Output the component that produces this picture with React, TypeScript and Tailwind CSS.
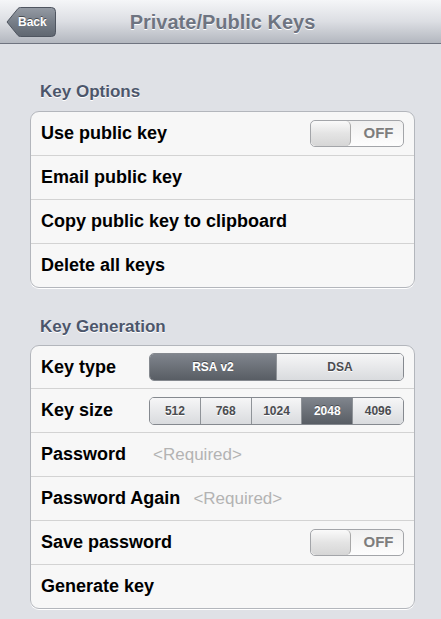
const font = { fontFamily: '"Liberation Sans", Arial, sans-serif' };

const BackButton = () => (
  <div className="relative w-[50px] h-[30px]">
    <svg className="absolute inset-0" width="50" height="30" viewBox="0 0 50 30">
      <defs>
        <linearGradient id="backGrad" x1="0" y1="0" x2="0" y2="1">
          <stop offset="0" stopColor="#959ba4" />
          <stop offset="0.5" stopColor="#777e88" />
          <stop offset="1" stopColor="#5f6670" />
        </linearGradient>
      </defs>
      <path
        d="M1 15 L12 1.5 Q13 0.5 14.5 0.5 H45.5 Q49.5 0.5 49.5 4.5 V25.5 Q49.5 29.5 45.5 29.5 H14.5 Q13 29.5 12 28.5 Z"
        fill="url(#backGrad)"
        stroke="#4f5560"
        strokeWidth="1"
      />
    </svg>
    <span className="relative flex h-full items-center pl-[12px] text-[12px] font-bold text-white [text-shadow:0_-1px_0_rgba(0,0,0,0.45)]">
      Back
    </span>
  </div>
);

const Toggle = () => (
  <div className="flex h-[27px] w-[94px] overflow-hidden rounded-[5px] border border-[#a3a5a9] bg-gradient-to-b from-[#f0f0f0] to-[#fdfdfd]">
    <div className="w-[40px] rounded-[5px] border-r border-[#a8a8a8] bg-gradient-to-b from-[#fafafa] via-[#e4e4e4] to-[#d6d6d6]" />
    <div className="flex flex-1 items-center justify-center pl-[3px] text-[15px] font-bold text-[#7d7d7d]">
      OFF
    </div>
  </div>
);

const Segmented = ({ items, selected }: { items: string[]; selected: number }) => (
  <div className="flex h-[28px] w-[255px] overflow-hidden rounded-[5px] border border-[#85898f]">
    {items.map((item, i) => (
      <div
        key={item}
        className={
          "flex flex-1 items-center justify-center text-[12px] font-bold " +
          (i > 0 ? "border-l border-[#8f9398] " : "") +
          (i === selected
            ? "bg-gradient-to-b from-[#80858d] to-[#585d64] text-white [text-shadow:0_-1px_0_rgba(0,0,0,0.4)]"
            : "bg-gradient-to-b from-[#f6f6f7] to-[#d9dbde] text-[#4a4c50] [text-shadow:0_1px_0_#ffffff]")
        }
      >
        {item}
      </div>
    ))}
  </div>
);

// rows are 44px with their top separator; the first row of a group has no separator
const Row = ({ children, first }: { children: React.ReactNode; first?: "h43" | "h42" }) => (
  <div
    className={
      "flex items-center pl-[10px] pr-[10px] " +
      (first === "h43" ? "h-[43px]" : first === "h42" ? "h-[42px]" : "h-[44px] border-t border-[#d3d3d3]")
    }
  >
    {children}
  </div>
);

const Label = ({ children }: { children: React.ReactNode }) => (
  <span className="text-[18px] font-bold text-black">{children}</span>
);

const Header = ({ children }: { children: React.ReactNode }) => (
  <h3 className="pl-[40px] text-[17px] leading-[20px] font-bold text-[#4c566b] [text-shadow:0_1px_0_#ffffff]">
    {children}
  </h3>
);

const Group = ({ children }: { children: React.ReactNode }) => (
  <div className="ml-[30px] mr-[26px] overflow-hidden rounded-[9px] border border-[#b3b6bc] bg-[#f7f7f7] shadow-[0_1px_0_#ffffff]">
    {children}
  </div>
);

export default function App() {
  return (
    <div className="h-[619px] w-[441px] overflow-hidden bg-[#dfe1e6]" style={font}>
      <div className="grid h-[44px] grid-cols-[1fr_auto_1fr] items-center border-b border-[#6f7480] bg-gradient-to-b from-[#f5f6f8] via-[#dcdee3] to-[#b3b7bf] px-[6px]">
        <div className="pt-[1px]">
          <BackButton />
        </div>
        <h1 className="ml-[4px] text-[20px] font-bold text-[#6e7481] [text-shadow:0_1px_0_#ffffff]">
          Private/Public Keys
        </h1>
        <div />
      </div>

      <div className="pt-[38px]">
        <Header>Key Options</Header>
        <div className="mt-[9px]">
          <Group>
            <Row first="h43">
              <Label>Use public key</Label>
              <div className="ml-auto">
                <Toggle />
              </div>
            </Row>
            <Row>
              <Label>Email public key</Label>
            </Row>
            <Row>
              <Label>Copy public key to clipboard</Label>
            </Row>
            <Row>
              <Label>Delete all keys</Label>
            </Row>
          </Group>
        </div>

        <div className="mt-[29px]">
          <Header>Key Generation</Header>
        </div>
        <div className="mt-[8px]">
          <Group>
            <Row first="h42">
              <Label>Key type</Label>
              <div className="ml-auto">
                <Segmented items={["RSA v2", "DSA"]} selected={0} />
              </div>
            </Row>
            <Row>
              <Label>Key size</Label>
              <div className="ml-auto">
                <Segmented items={["512", "768", "1024", "2048", "4096"]} selected={3} />
              </div>
            </Row>
            <Row>
              <Label>Password</Label>
              <span className="ml-[27px] text-[17px] text-[#b3b3b3]">&lt;Required&gt;</span>
            </Row>
            <Row>
              <Label>Password Again</Label>
              <span className="ml-[13px] text-[17px] text-[#b3b3b3]">&lt;Required&gt;</span>
            </Row>
            <Row>
              <Label>Save password</Label>
              <div className="ml-auto">
                <Toggle />
              </div>
            </Row>
            <Row>
              <Label>Generate key</Label>
            </Row>
          </Group>
        </div>
      </div>
    </div>
  );
}
